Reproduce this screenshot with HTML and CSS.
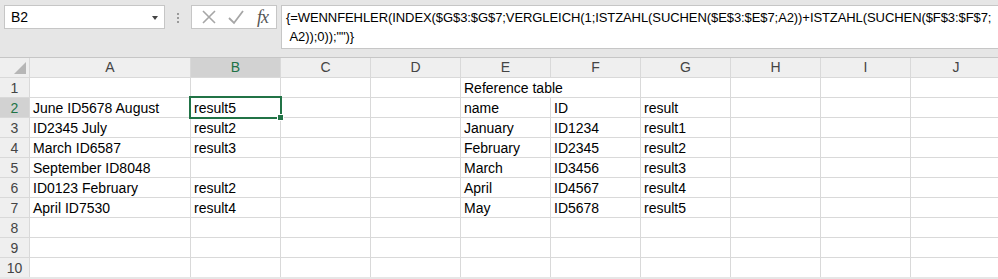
FILE: index.html
```html
<!DOCTYPE html>
<html lang="de">
<head>
  <meta charset="UTF-8" />
  <title>Excel - WENNFEHLER</title>
  <link rel="stylesheet" href="styles.css">
</head>
<body>
  <div id="bar">
    <div id="namebox">
      <span>B2</span>
      <span class="arrow"></span>
    </div>
    <div class="grip"><i></i><i></i><i></i></div>
    <div id="fxbox">
      <svg width="16" height="16" viewBox="0 0 16 16"><path d="M2 2 L14 14 M14 2 L2 14" stroke="#a6a6a6" stroke-width="1.6" fill="none"/></svg>
      <svg width="18" height="16" viewBox="0 0 18 16"><path d="M2 9 L7 14 L16 2" stroke="#a6a6a6" stroke-width="1.8" fill="none"/></svg>
      <span class="fx">fx</span>
    </div>
    <div id="formula">{=WENNFEHLER(INDEX($G$3:$G$7;VERGLEICH(1;ISTZAHL(SUCHEN($E$3:$E$7;A2))+ISTZAHL(SUCHEN($F$3:$F$7;<br>&nbsp;A2));0));"")}</div>
  </div>

  <div id="sheet">
    <!-- column headers -->
    <div class="hd corner"><span class="tri"></span></div>
    <div class="hd">A</div>
    <div class="hd sel">B</div>
    <div class="hd">C</div>
    <div class="hd">D</div>
    <div class="hd">E</div>
    <div class="hd">F</div>
    <div class="hd">G</div>
    <div class="hd">H</div>
    <div class="hd">I</div>
    <div class="hd">J</div>

    <!-- row 1 -->
    <div class="rh">1</div>
    <div class="c"></div><div class="c"></div><div class="c"></div><div class="c"></div>
    <div class="c span">Reference table</div><div class="c"></div>
    <div class="c"></div><div class="c"></div><div class="c"></div>

    <!-- row 2 -->
    <div class="rh sel">2</div>
    <div class="c">June ID5678 August</div>
    <div class="c active">result5<span class="handle"></span></div>
    <div class="c"></div><div class="c"></div>
    <div class="c">name</div><div class="c">ID</div><div class="c">result</div>
    <div class="c"></div><div class="c"></div><div class="c"></div>

    <!-- row 3 -->
    <div class="rh">3</div>
    <div class="c">ID2345 July</div>
    <div class="c">result2</div>
    <div class="c"></div><div class="c"></div>
    <div class="c">January</div><div class="c">ID1234</div><div class="c">result1</div>
    <div class="c"></div><div class="c"></div><div class="c"></div>

    <!-- row 4 -->
    <div class="rh">4</div>
    <div class="c">March ID6587</div>
    <div class="c">result3</div>
    <div class="c"></div><div class="c"></div>
    <div class="c">February</div><div class="c">ID2345</div><div class="c">result2</div>
    <div class="c"></div><div class="c"></div><div class="c"></div>

    <!-- row 5 -->
    <div class="rh">5</div>
    <div class="c">September ID8048</div>
    <div class="c"></div>
    <div class="c"></div><div class="c"></div>
    <div class="c">March</div><div class="c">ID3456</div><div class="c">result3</div>
    <div class="c"></div><div class="c"></div><div class="c"></div>

    <!-- row 6 -->
    <div class="rh">6</div>
    <div class="c">ID0123 February</div>
    <div class="c">result2</div>
    <div class="c"></div><div class="c"></div>
    <div class="c">April</div><div class="c">ID4567</div><div class="c">result4</div>
    <div class="c"></div><div class="c"></div><div class="c"></div>

    <!-- row 7 -->
    <div class="rh">7</div>
    <div class="c">April ID7530</div>
    <div class="c">result4</div>
    <div class="c"></div><div class="c"></div>
    <div class="c">May</div><div class="c">ID5678</div><div class="c">result5</div>
    <div class="c"></div><div class="c"></div><div class="c"></div>

    <!-- rows 8-10 -->
    <div class="rh">8</div>
    <div class="c"></div><div class="c"></div><div class="c"></div><div class="c"></div><div class="c"></div>
    <div class="c"></div><div class="c"></div><div class="c"></div><div class="c"></div><div class="c"></div>
    <div class="rh">9</div>
    <div class="c"></div><div class="c"></div><div class="c"></div><div class="c"></div><div class="c"></div>
    <div class="c"></div><div class="c"></div><div class="c"></div><div class="c"></div><div class="c"></div>
    <div class="rh">10</div>
    <div class="c"></div><div class="c"></div><div class="c"></div><div class="c"></div><div class="c"></div>
    <div class="c"></div><div class="c"></div><div class="c"></div><div class="c"></div><div class="c"></div>
  </div>
</body>
</html>
```

FILE: styles.css
```css
:root {
  --chrome: #e6e6e6;
  --box-border: #c6c6c6;
  --grid: #d9d9d9;
  --head: #efefef;
  --head-sel: #d2d2d2;
  --green: #217346;
  --text: #000;
}
body {
  margin: 0;
  background: var(--chrome);
  font-family: 'Liberation Sans', Arial, sans-serif;
  font-size: 14px;
  color: var(--text);
  overflow: hidden;
}

/* formula bar */
#bar {
  display: flex;
  align-items: flex-start;
  padding: 5px 0 8px 4px;
  height: 44px;
}
#namebox {
  width: 161px;
  height: 24px;
  background: #fff;
  border: 1px solid var(--box-border);
  display: flex;
  align-items: center;
  justify-content: space-between;
  padding: 0 0 0 6px;
  box-sizing: border-box;
}
#namebox .arrow {
  width: 0;
  height: 0;
  border-left: 3px solid transparent;
  border-right: 3px solid transparent;
  border-top: 4px solid #444;
  margin-right: 6px;
  margin-top: 1px;
}
.grip {
  width: 26px;
  display: flex;
  flex-direction: column;
  align-items: center;
  gap: 2px;
  padding-top: 8px;
}
.grip i {
  width: 2px;
  height: 2px;
  background: #9a9a9a;
}
#fxbox {
  width: 86px;
  height: 24px;
  background: #fff;
  border: 1px solid var(--box-border);
  display: flex;
  align-items: center;
  gap: 10px;
  padding-left: 9px;
  box-sizing: border-box;
}
#fxbox .fx {
  font-family: 'Liberation Serif', 'Times New Roman', serif;
  font-style: italic;
  font-size: 18px;
  color: #555;
  margin-left: 2px;
  letter-spacing: -1px;
}
#formula {
  flex: 1;
  margin-left: 4px;
  background: #fff;
  border: 1px solid var(--box-border);
  border-right: none;
  padding: 2px 0 0 4px;
  box-sizing: border-box;
  height: 44px;
  line-height: 19px;
  font-size: 13px;
  letter-spacing: -0.08px;
  white-space: nowrap;
}

/* sheet grid */
#sheet {
  display: grid;
  grid-template-columns: 29px 160px repeat(8, 89px) 90px;
  grid-auto-rows: 19px;
  gap: 1px;
  background: var(--grid);
  border-top: 1px solid var(--box-border);
}
.hd {
  background: var(--head);
  color: #444;
  text-align: center;
  line-height: 19px;
}
.hd.sel {
  background: var(--head-sel);
  color: var(--green);
}
.corner {
  position: relative;
}
.corner .tri {
  position: absolute;
  right: 3px;
  bottom: 3px;
  width: 0;
  height: 0;
  border-left: 12px solid transparent;
  border-bottom: 12px solid #b6b6b6;
}
.rh {
  background: var(--head);
  color: #444;
  text-align: center;
  line-height: 20px;
}
.rh.sel {
  background: var(--head-sel);
  color: var(--green);
}
.c {
  background: #fff;
  padding-left: 3px;
  line-height: 20px;
  white-space: nowrap;
}
.c.span {
  grid-column: span 2;
}
.c.active {
  position: relative;
  z-index: 1;
  outline: 2px solid var(--green);
  outline-offset: 0;
}
.handle {
  position: absolute;
  right: -4px;
  bottom: -4px;
  width: 5px;
  height: 5px;
  background: var(--green);
  border: 1px solid #fff;
}
```
